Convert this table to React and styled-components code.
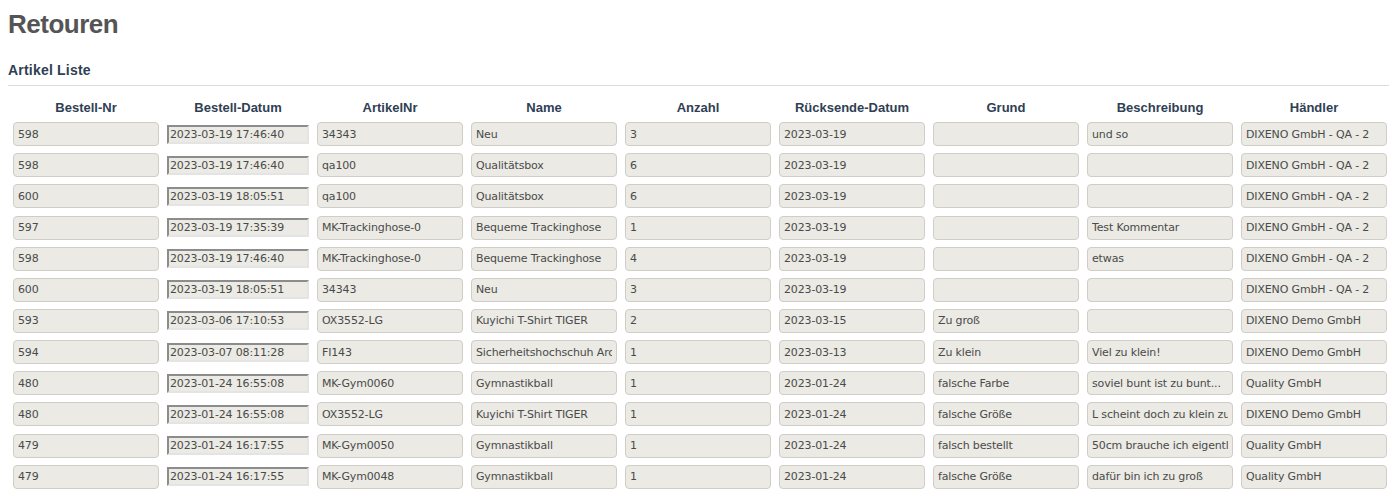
import React from "react";
import styled, { createGlobalStyle } from "styled-components";

const GlobalStyle = createGlobalStyle`
  body {
    margin: 8px;
    background: #fff;
    font-family: "Liberation Sans", Arial, sans-serif;
    overflow: hidden;
  }
`;

const Title = styled.h1`
  margin: 1px 0 0;
  font-size: 26px;
  line-height: 30px;
  letter-spacing: -0.5px;
  font-weight: bold;
  color: #555;
`;

const SectionTitle = styled.h2`
  margin: 22px -8px 0 0;
  padding-bottom: 6px;
  border-bottom: 1px solid #dcdcdc;
  font-size: 14px;
  line-height: 18px;
  letter-spacing: 0.2px;
  font-weight: bold;
  color: #2f4054;
`;

const Table = styled.div`
  margin: 14px 0 0 5px;
  display: flex;
  flex-direction: column;
  gap: 7.15px;
`;

// the date column is a little narrower than the others
const Row = styled.div`
  display: grid;
  grid-template-columns: 146px 142px repeat(7, 146px);
  column-gap: 8px;
  align-items: center;
  height: ${p => (p.$head ? "16px" : "24px")};
  margin-bottom: ${p => (p.$head ? "-1px" : "0")};
`;

const HeadCell = styled.div`
  text-align: center;
  font-size: 13px;
  line-height: 16px;
  font-weight: bold;
  color: #2f4054;
`;

const Field = styled.input`
  box-sizing: border-box;
  width: ${p => (p.$inset ? "142px" : "146px")};
  height: ${p => (p.$inset ? "19px" : "24px")};
  margin: 0;
  padding: ${p => (p.$inset ? "0 1px" : "0 4px")};
  font-family: "DejaVu Sans", Verdana, sans-serif;
  font-size: 11px;
  letter-spacing: -0.15px;
  color: #4a4a4a;
  background: #ebeae4;
  border-style: solid;
  border-width: ${p => (p.$inset ? "2px" : "1px")};
  border-color: ${p => (p.$inset ? "#8c8c8c #e4e4e4 #e4e4e4 #8c8c8c" : "#cfcdc6")};
  border-radius: ${p => (p.$inset ? "0" : "4px")};
  outline: none;
`;

const columns = [
  "Bestell-Nr",
  "Bestell-Datum",
  "ArtikelNr",
  "Name",
  "Anzahl",
  "Rücksende-Datum",
  "Grund",
  "Beschreibung",
  "Händler",
];

const QA = "DIXENO GmbH - QA - 2";
const DEMO = "DIXENO Demo GmbH";

const rows = [
  ["598", "2023-03-19 17:46:40", "34343", "Neu", "3", "2023-03-19", "", "und so", QA],
  ["598", "2023-03-19 17:46:40", "qa100", "Qualitätsbox", "6", "2023-03-19", "", "", QA],
  ["600", "2023-03-19 18:05:51", "qa100", "Qualitätsbox", "6", "2023-03-19", "", "", QA],
  ["597", "2023-03-19 17:35:39", "MK-Trackinghose-0", "Bequeme Trackinghose", "1", "2023-03-19", "", "Test Kommentar", QA],
  ["598", "2023-03-19 17:46:40", "MK-Trackinghose-0", "Bequeme Trackinghose", "4", "2023-03-19", "", "etwas", QA],
  ["600", "2023-03-19 18:05:51", "34343", "Neu", "3", "2023-03-19", "", "", QA],
  ["593", "2023-03-06 17:10:53", "OX3552-LG", "Kuyichi T-Shirt TIGER", "2", "2023-03-15", "Zu groß", "", DEMO],
  ["594", "2023-03-07 08:11:28", "FI143", "Sicherheitshochschuh Arcore", "1", "2023-03-13", "Zu klein", "Viel zu klein!", DEMO],
  ["480", "2023-01-24 16:55:08", "MK-Gym0060", "Gymnastikball", "1", "2023-01-24", "falsche Farbe", "soviel bunt ist zu bunt...", "Quality GmbH"],
  ["480", "2023-01-24 16:55:08", "OX3552-LG", "Kuyichi T-Shirt TIGER", "1", "2023-01-24", "falsche Größe", "L scheint doch zu klein zu sein", DEMO],
  ["479", "2023-01-24 16:17:55", "MK-Gym0050", "Gymnastikball", "1", "2023-01-24", "falsch bestellt", "50cm brauche ich eigentlich", "Quality GmbH"],
  ["479", "2023-01-24 16:17:55", "MK-Gym0048", "Gymnastikball", "1", "2023-01-24", "falsche Größe", "dafür bin ich zu groß", "Quality GmbH"],
];

export default function App() {
  return (
    <>
      <GlobalStyle />
      <Title>Retouren</Title>
      <SectionTitle>Artikel Liste</SectionTitle>
      <Table>
        <Row $head>
          {columns.map(c => (
            <HeadCell key={c}>{c}</HeadCell>
          ))}
        </Row>
        {rows.map((r, i) => (
          <Row key={i}>
            {r.map((v, j) => (
              <Field key={j} readOnly value={v} $inset={j === 1} />
            ))}
          </Row>
        ))}
      </Table>
    </>
  );
}
